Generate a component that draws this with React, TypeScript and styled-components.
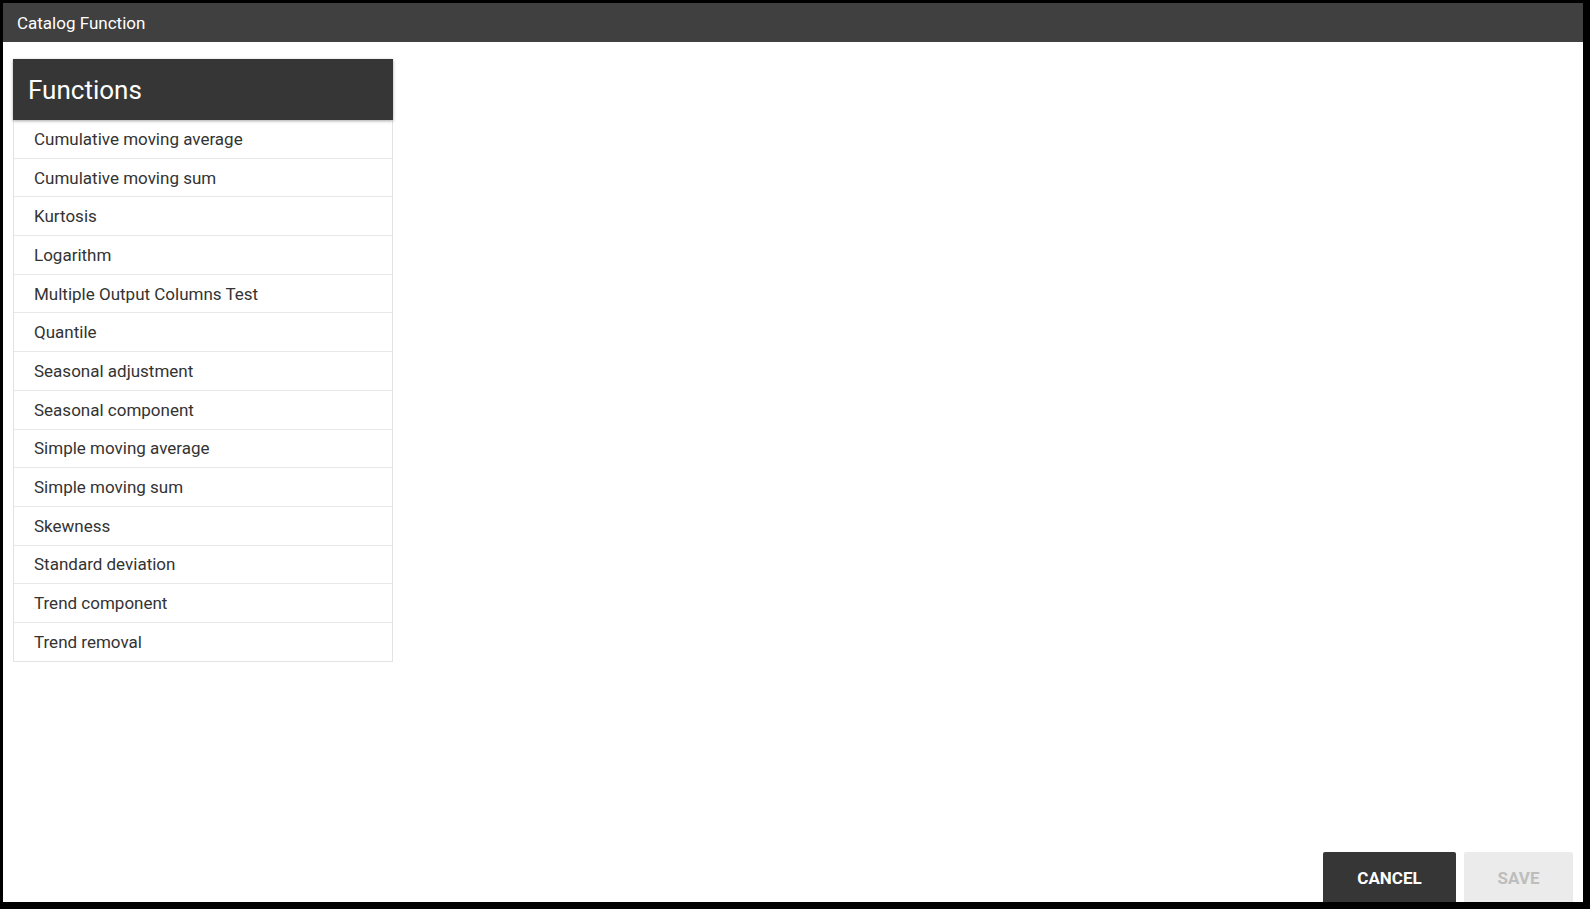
import React from 'react';
import styled, {createGlobalStyle} from "styled-components";

const GlobalStyle = createGlobalStyle`
    html, body {
        margin: 0;
        padding: 0;
        background: #000;
        font-family: Roboto, "Liberation Sans", Arial, sans-serif;
    }
`;

const functions = [
    "Cumulative moving average",
    "Cumulative moving sum",
    "Kurtosis",
    "Logarithm",
    "Multiple Output Columns Test",
    "Quantile",
    "Seasonal adjustment",
    "Seasonal component",
    "Simple moving average",
    "Simple moving sum",
    "Skewness",
    "Standard deviation",
    "Trend component",
    "Trend removal",
];

type ButtonPropsType = {
    disabled?: boolean
}

export default function App() {
    return (
        <>
            <GlobalStyle/>
            <Dialog>
                <TitleBar>Catalog Function</TitleBar>
                <Body>
                    <Panel>
                        <PanelHeader>Functions</PanelHeader>
                        <List>
                            {functions.map(name => (
                                <Item key={name}>{name}</Item>
                            ))}
                        </List>
                    </Panel>
                </Body>
                <Footer>
                    <Button>CANCEL</Button>
                    <Button disabled>SAVE</Button>
                </Footer>
            </Dialog>
        </>
    );
}

const Dialog = styled.div`
    margin: 3px 7px 0 3px;
    width: 1580px;
    height: 899px;
    background: #fff;
    display: flex;
    flex-direction: column;
    overflow: hidden;
`;

const TitleBar = styled.div`
    height: 39px;
    flex-shrink: 0;
    background: #404040;
    color: #fff;
    font-size: 17px;
    display: flex;
    align-items: center;
    padding-left: 14px;
`;

const Body = styled.div`
    flex: 1;
    padding: 17px 10px;
`;

const Panel = styled.div`
    width: 380px;
`;

const PanelHeader = styled.div`
    height: 61px;
    background: #363636;
    color: #fff;
    font-size: 26px;
    display: flex;
    align-items: center;
    padding-left: 15px;
    box-shadow: 0 1px 3px rgba(0, 0, 0, 0.35);
    position: relative;
`;

const List = styled.div`
    border: 1px solid #e3e3e3;
    border-top: none;
`;

const Item = styled.div`
    height: 37.7px;
    display: flex;
    align-items: center;
    padding-left: 20px;
    font-size: 17px;
    color: #333;
    border-top: 1px solid #e8e8e8;
    &:first-child {
        border-top: none;
    }
`;

const Footer = styled.div`
    flex-shrink: 0;
    display: flex;
    justify-content: flex-end;
    gap: 8px;
    padding-right: 10px;
    height: 50px;
    align-items: flex-start;
`;

const Button = styled.button<ButtonPropsType>`
    height: 52px;
    border: none;
    border-radius: 2px;
    font-family: Roboto, "Liberation Sans", Arial, sans-serif;
    font-size: 17px;
    font-weight: 700;
    width: ${props => props.disabled ? "109px" : "133px"};
    background: ${props => props.disabled ? "#ebebeb" : "#363636"};
    color: ${props => props.disabled ? "#bdbdbd" : "#fff"};
    padding: 0;
    cursor: pointer;
`;
